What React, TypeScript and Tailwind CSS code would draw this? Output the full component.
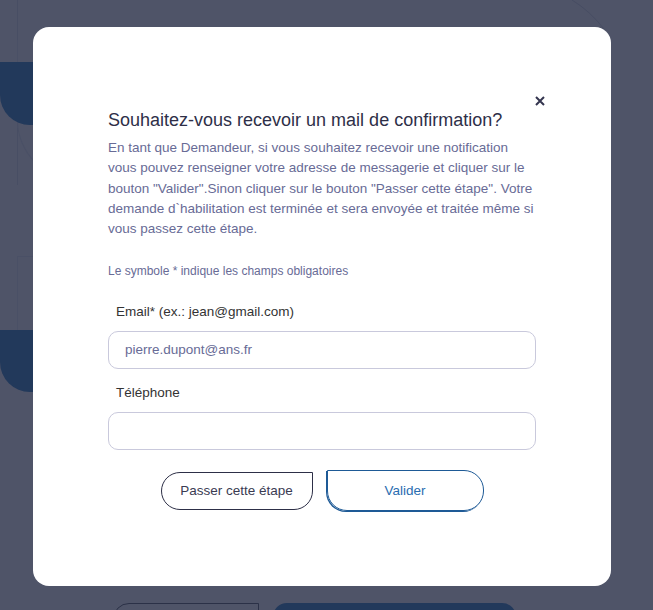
import React from "react";

function BackgroundPage() {
  return (
    <div className="absolute inset-0">
      <div className="absolute left-[17px] top-0 h-[185px] w-px bg-[#484e64]" />
      <div className="absolute left-[17px] top-[40px] w-[80px] h-[140px] rounded-bl-[60px] border-l border-b border-[#4a5066]" />
      <div className="absolute left-0 top-[62px] w-[40px] h-[63px] rounded-bl-[30px] bg-[#22395b]" />
      <div className="absolute left-[17px] top-[256px] w-[30px] h-[80px] border-l border-t border-[#4a5066]" />
      <div className="absolute left-0 top-[330px] w-[40px] h-[62px] rounded-bl-[30px] bg-[#22395b]" />
      <svg className="absolute left-0 top-0" width="653" height="40" viewBox="0 0 653 40" fill="none">
        <path d="M572 0 Q 590 11 604 29" stroke="#474d63" strokeWidth="1" />
      </svg>
      <div className="absolute left-[113px] top-[603px] w-[146px] h-[20px] rounded-tl-[16px] border border-[#2b3147]" />
      <div className="absolute left-[273px] top-[603px] w-[243px] h-[20px] rounded-t-[14px] bg-[#22395b]" />
    </div>
  );
}

export default function App() {
  const font = { fontFamily: '"Liberation Sans", Arial, sans-serif' };
  return (
    <div className="relative w-[653px] h-[610px] overflow-hidden bg-[#4f5468]" style={font}>
      <BackgroundPage />
      <div className="relative flex pl-[33px] pt-[27px]">
        <div className="relative w-[578px] h-[559px] rounded-[16px] bg-white px-[75px] pt-[81px] flex flex-col">
          <button className="absolute left-[501px] top-[68px] w-[12px] h-[12px] flex items-center justify-center text-[#34354f]">
            <svg width="10" height="10" viewBox="0 0 10 10" fill="none" stroke="currentColor" strokeWidth="2">
              <path d="M1 1 L9 9 M9 1 L1 9" />
            </svg>
          </button>
          <h2 className="text-[18px] leading-[24px] text-[#2e2f48] font-normal">
            Souhaitez-vous recevoir un mail de confirmation?
          </h2>
          <p className="mt-[6px] text-[13.5px] leading-[20.3px] text-[#686b96]">
            En tant que Demandeur, si vous souhaitez recevoir une notification vous pouvez renseigner votre adresse de messagerie et cliquer sur le bouton "Valider".Sinon cliquer sur le bouton "Passer cette étape". Votre demande d`habilitation est terminée et sera envoyée et traitée même si vous passez cette étape.
          </p>
          <p className="mt-[24px] text-[12px] leading-[16px] text-[#686b96]">
            Le symbole * indique les champs obligatoires
          </p>
          <label className="block mt-[23px] pl-[8px] text-[13.5px] leading-[20px] text-[#333]">
            Email* (ex.: jean@gmail.com)
          </label>
          <div className="mt-[9px] h-[38px] rounded-[10px] border border-[#c9c9dc] flex items-center pl-[16px] text-[13.5px] text-[#686b96]">
            pierre.dupont@ans.fr
          </div>
          <label className="block mt-[14px] pl-[8px] text-[13.5px] leading-[20px] text-[#333]">
            Téléphone
          </label>
          <div className="mt-[9px] h-[38px] rounded-[10px] border border-[#c9c9dc]" />
          <div className="mt-[20px] flex items-center justify-center gap-[14px]">
            <button className="w-[152px] h-[38px] rounded-[19px] rounded-tr-none border border-[#2d2f47] text-[13.5px] text-[#3a3b52]">
              Passer cette étape
            </button>
            <button className="w-[157px] h-[41px] rounded-[20px] rounded-tl-none border border-[#1e5a96] shadow-[-1px_1px_0_#1e5a96] text-[13.5px] text-[#2a6db0]">
              Valider
            </button>
          </div>
        </div>
      </div>
    </div>
  );
}
